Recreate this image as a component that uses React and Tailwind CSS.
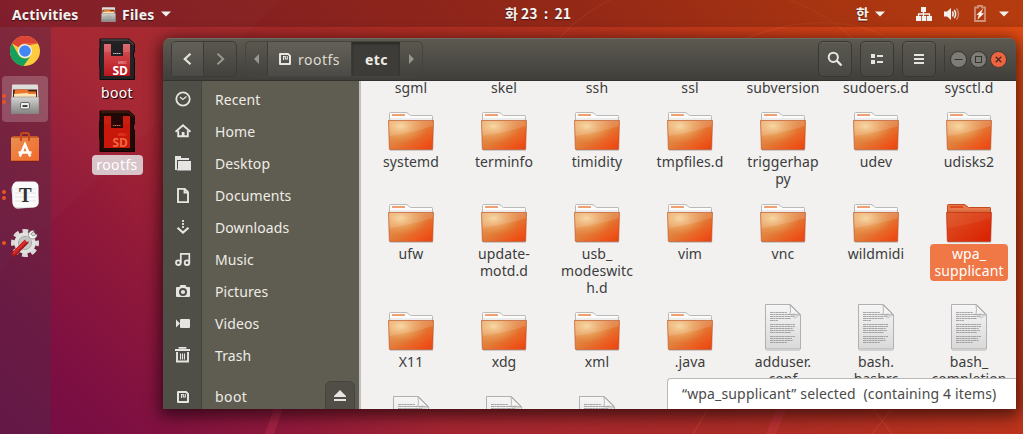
import React from "react";

const Svg = ({ w, h, box, children, className = "" }) => (
  <svg width={w} height={h} viewBox={box || `0 0 ${w} ${h}`} className={`block shrink-0 ${className}`} fill="none">
    {children}
  </svg>
);

function Defs() {
  return (
    <svg width="0" height="0" className="absolute">
      <defs>
        <linearGradient id="fold" x1="0" y1="0" x2="1" y2="1">
          <stop offset="0" stopColor="#eba469" />
          <stop offset="0.5" stopColor="#e27c38" />
          <stop offset="0.85" stopColor="#ee5016" />
          <stop offset="1" stopColor="#d9491a" />
        </linearGradient>
        <radialGradient id="glow" cx="0.27" cy="0.2" r="0.6">
          <stop offset="0" stopColor="#f7d69c" stopOpacity="0.95" />
          <stop offset="1" stopColor="#e8a050" stopOpacity="0" />
        </radialGradient>
        <linearGradient id="foldSel" x1="0" y1="0" x2="1" y2="0.8">
          <stop offset="0" stopColor="#dd5423" />
          <stop offset="1" stopColor="#da2304" />
        </linearGradient>
        <linearGradient id="paper" x1="0" y1="0" x2="0" y2="1">
          <stop offset="0" stopColor="#f6f6f6" />
          <stop offset="1" stopColor="#d9d9d9" />
        </linearGradient>
        <linearGradient id="metal" x1="0" y1="0" x2="0" y2="1">
          <stop offset="0" stopColor="#d4d4d2" />
          <stop offset="1" stopColor="#858583" />
        </linearGradient>
        <linearGradient id="card" x1="0" y1="0" x2="0" y2="1">
          <stop offset="0" stopColor="#d9575b" />
          <stop offset="1" stopColor="#b7161d" />
        </linearGradient>
        <linearGradient id="bag" x1="0" y1="0" x2="1" y2="1">
          <stop offset="0" stopColor="#e8904f" />
          <stop offset="1" stopColor="#f3692a" />
        </linearGradient>
      </defs>
    </svg>
  );
}

function Folder({ selected }) {
  return (
    <Svg w={48} h={48}>
      <path d="M3 46.3H46" stroke="#000" strokeOpacity=".2" />
      <path
        d="M2.5 18V9.5Q2.5 8.5 3.5 8.5H19Q20 8.5 21 9.5L23.5 11.5H45Q45.5 11.5 45.5 12.5V18Z"
        fill={selected ? "#e8784a" : "#fbfbfb"}
        stroke={selected ? "#c24a20" : "#b9b9b7"}
      />
      <rect x="5" y="10" width="13" height="2" rx=".6" fill={selected ? "#dd4a20" : "#f0a070"} />
      <path d="M3 15H45" stroke={selected ? "#d15c34" : "#dcdcdc"} />
      <path d="M1.5 16.5H46.5L45.7 45Q45.6 45.5 45 45.5H3Q2.4 45.5 2.3 45Z" fill={selected ? "url(#foldSel)" : "url(#fold)"} />
      {!selected && <path d="M1.5 16.5H46.5L45.7 45H2.3Z" fill="url(#glow)" />}
      <path d="M2 17H46L45.8 22Q28 28 2.4 32Z" fill="#fff" fillOpacity={selected ? ".06" : ".13"} />
      <path d="M1.5 16.5H46.5L45.7 45Q45.6 45.5 45 45.5H3Q2.4 45.5 2.3 45Z" stroke={selected ? "#b32406" : "#b74b20"} strokeOpacity=".6" />
    </Svg>
  );
}

function TextFile() {
  const lines = [17, 25, 24, 21, 8, 0, 25, 25, 23, 24, 21, 0, 25, 22, 23, 17];
  return (
    <Svg w={48} h={48}>
      <path d="M7 46.3H41" stroke="#000" strokeOpacity=".15" />
      <path d="M6.5 .5H31.5L41.5 10.5V45H6.5Z" fill="url(#paper)" stroke="#b0b0b0" />
      {lines.map((l, i) => (
        <path key={i} d={`M11 ${8.5 + i * 2}h${l}`} stroke="#8e8e8e" strokeOpacity=".75" strokeDasharray="3 .4 2 .3" />
      ))}
      <path d="M31 1Q32 6 31 10.5Q36 9.5 41 11Z" fill="#f4f4f4" stroke="#aaa" strokeWidth=".8" />
      <path d="M31 11l5 4 5-3.5Q36 9.5 31 11Z" fill="#aaa" fillOpacity=".35" />
    </Svg>
  );
}

function SdCard({ selected }) {
  return (
    <Svg w={36} h={43}>
      <path d="M1 1H30L35.5 6V14L34.5 15V19L35.5 20V41.5H1V29L0 28V12L1 11Z" fill={selected ? "#1e0b05" : "#232325"} stroke={selected ? "#100" : "#0b0b0c"} />
      <path d="M2 2H29.5L34.5 6.6" stroke={selected ? "#5a2815" : "#5a5a5c"} />
      <path d="M5 6H31V38H5Z" fill={selected ? "#c9170c" : "url(#card)"} />
      <path d="M5 6H31V14H5Z" fill="#fff" fillOpacity={selected ? ".03" : ".12"} />
      <path d="M12 6H24V18H12Z" fill={selected ? "#250805" : "#202022"} />
      <path d="M14 15.5H22" stroke={selected ? "#c9663c" : "#b9b9b9"} strokeDasharray="1.6 .4" />
      <text x="19" y="26.3" textLength="9" lengthAdjust="spacingAndGlyphs" fontFamily="Open Sans, sans-serif" fontSize="4" fill={selected ? "#ef5b34" : "#f6c7c7"}>MMC</text>
      <text x="13.5" y="36.8" textLength="15.5" lengthAdjust="spacingAndGlyphs" fontFamily="Open Sans, sans-serif" fontWeight="700" fontSize="13" fill={selected ? "#f0693c" : "#fff"}>SD</text>
    </Svg>
  );
}

function Cabinet({ size = 30 }) {
  return (
    <Svg w={size} h={size} box="0 0 30 30">
      <path d="M2 1.5Q2 .5 3 .5H27Q28 .5 28 1.5L28.8 28.5Q28.8 29.5 28 29.5H2Q1.2 29.5 1.2 28.5Z" fill="#dededc" />
      <path d="M3 5.5H27V13H3Z" fill="#4a2412" />
      <path d="M5 5.5H17L19 7.5H26V13H4Z" fill="#e8762e" />
      <path d="M4 10L17 9l2 1h7v3H4Z" fill="#ffe5b5" />
      <path d="M1 13H29V29Q29 29.5 28 29.5H2Q1 29.5 1 29Z" fill="url(#metal)" stroke="#777" strokeWidth=".5" />
      <rect x="10.5" y="18.5" width="9" height="6.5" rx="1.4" fill="#ececea" stroke="#666" />
      <rect x="12.5" y="21" width="5" height="2" fill="#444" />
    </Svg>
  );
}

const Chrome = () => (
  <Svg w={30} h={30}>
    <circle cx="15" cy="15" r="15" fill="#fdcb3d" />
    <path d="M2 7.5A15 15 0 0 1 28 7.5H15A7.5 7.5 0 0 0 8.5 11.2Z" fill="#dd4436" />
    <path d="M28 7.5H15L8 11Z" fill="#dd4436" />
    <path d="M2 7.5A15 15 0 0 0 13.5 30L21.5 18.8A7.5 7.5 0 0 1 8.5 18.8Z" fill="#16a05d" />
    <circle cx="15" cy="15" r="7" fill="#f3f5f7" />
    <circle cx="15" cy="15" r="5.8" fill="#4486f4" />
  </Svg>
);

const Software = () => (
  <Svg w={30} h={32}>
    <path d="M1 6.5L3 5H27L29 6.5Z" fill="#c9531d" />
    <path d="M1 6.5H29V30H1Z" fill="url(#bag)" />
    <path d="M1 30.3H29" stroke="#7b1d1a" />
    <path d="M11 10V4Q11 2 13 2H17Q19 2 19 4V10" stroke="#c9481a" strokeWidth="2" />
    <path d="M9.8 25.5L15 13.5L20.2 25.5M8.5 21.5H21.5" stroke="#fff" strokeWidth="2.5" />
  </Svg>
);

const Typora = () => (
  <Svg w={30} h={30}>
    <rect x="2" y="3" width="26" height="25" rx="5" fill="#cfcfcf" transform="rotate(-5 15 15)" />
    <rect x="2.5" y="1.5" width="26" height="26" rx="5" fill="#fafafa" />
    <path d="M5 9H26M5 13H26M5 17H26M5 21H26" stroke="#e4e4e4" />
    <text x="9" y="21.6" textLength="12.6" lengthAdjust="spacingAndGlyphs" fontFamily="Liberation Serif, serif" fontWeight="700" fontSize="22" fill="#303030">T</text>
  </Svg>
);

const Settings = () => (
  <Svg w={30} h={30}>
    <circle cx="15" cy="15" r="11.8" stroke="#d9d9d7" strokeWidth="4.4" strokeDasharray="5.6 3.67" strokeDashoffset="2.8" />
    <circle cx="15" cy="15" r="8.5" fill="#c6c6c4" stroke="#e0e0de" strokeWidth="4.5" />
    <circle cx="15" cy="15" r="6.5" stroke="#a6a6a4" />
    <path d="M4 26L16 14" stroke="#9e1719" strokeWidth="5" strokeLinecap="round" />
    <path d="M4 25L15.5 13.5" stroke="#d8292b" strokeWidth="3" strokeLinecap="round" />
    <path d="M16 13L20 9.5" stroke="#c4c4c2" strokeWidth="3.6" />
    <path d="M24.5 2.8A4.3 4.3 0 1 0 27 6L23 8L20.8 6Z" fill="#f4f4f2" stroke="#777" strokeWidth=".7" />
  </Svg>
);

function DockItem({ dots = 0, active, children }) {
  return (
    <div className="relative flex h-12 w-[50px] items-center justify-center">
      <div className={`flex h-[46px] w-[46px] items-center justify-center rounded-[4px] ${active ? "bg-white/20" : ""}`}>{children}</div>
      <div className="absolute left-[2px] top-0 flex h-12 flex-col items-center justify-center gap-[2px]">
        {Array.from({ length: dots }, (_, i) => <i key={i} className="block h-1 w-1 rounded-full bg-[#e95420]" />)}
      </div>
    </div>
  );
}

const Caret = () => <Svg w={10} h={6}><path d="M0 .5H10L5 5.5Z" fill="#f2f2f0" /></Svg>;

const FG = "#e6e5e1";
const places = [
  ["Recent", <><circle cx="8" cy="8" r="6.7" stroke={FG} strokeWidth="1.8" /><path d="M5 6l2.8 2.5L11.5 5.5" stroke={FG} strokeWidth="1.3" /></>],
  ["Home", <><path d="M.5 8.8L8 2.2L15.5 8.8" stroke={FG} strokeWidth="1.9" /><path d="M3.2 7.5V13.2H12.8V7.5" stroke={FG} strokeWidth="1.9" /><path d="M6.7 9h2.8v4H6.7Z" fill={FG} /></>],
  ["Desktop", <><path d="M0 1H6V3H14V5H2V15H0Z" fill={FG} /><path d="M3 6H16V15.5H2L3 13Z" fill={FG} /></>],
  ["Documents", <path d="M3 1.9H9.7L13 5.2V15.1H3ZM9.5 1.9V5.6H13" stroke={FG} strokeWidth="1.9" />],
  ["Downloads", <><path d="M8 1V9" stroke={FG} strokeWidth="1.8" strokeDasharray="2 1" /><path d="M2.5 8.8L8 13.6L13.5 8.8" stroke={FG} strokeWidth="2.1" /></>],
  ["Music", <><circle cx="3.3" cy="11.7" r="2.3" stroke={FG} strokeWidth="1.8" /><circle cx="12" cy="11.7" r="2.3" stroke={FG} strokeWidth="1.8" /><path d="M5.8 12V2.8H14.3V12" stroke={FG} strokeWidth="1.7" /></>],
  ["Pictures", <><path fillRule="evenodd" d="M2 4H4.5L5.5 2H10.5L11.5 4H14Q15 4 15 5V13Q15 14 14 14H2Q1 14 1 13V5Q1 4 2 4ZM8 5A4 4 0 1 0 8 13A4 4 0 1 0 8 5Z" fill={FG} /><circle cx="8" cy="9" r="2.1" fill={FG} /></>],
  ["Videos", <><rect x="5" y="4" width="10" height="9" rx="1" fill={FG} /><path d="M1 4.5L5 8.5L1 12.5Z" fill={FG} /></>],
  ["Trash", <><path d="M0 3H15M4.5 1.6V.9H10.5V1.6" stroke={FG} strokeWidth="1.9" /><path d="M2 5V14.5H13V5" stroke={FG} strokeWidth="1.9" /><path d="M5.5 6.5V12.5M7.5 6.5V12.5M9.5 6.5V12.5" stroke={FG} strokeWidth="1.1" /></>],
];

const Drive = () => (
  <>
    <path d="M3 2.9H11L13 4.9V13.1H3Z" stroke={FG} strokeWidth="2" strokeLinejoin="round" />
    <path d="M6.5 9V5.5H8.3V8H10.3V5" stroke={FG} strokeWidth="1.1" />
  </>
);

const rows = [
  [["systemd"], ["terminfo"], ["timidity"], ["tmpfiles.d"], ["triggerhap", "py"], ["udev"], ["udisks2"]],
  [["ufw"], ["update-", "motd.d"], ["usb_", "modeswitc", "h.d"], ["vim"], ["vnc"], ["wildmidi"], ["wpa_", "supplicant"]],
  [["X11"], ["xdg"], ["xml"], [".java"], ["adduser.", "conf"], ["bash.", "bashrc"], ["bash_", "completion"]],
];

function Item({ lines, file, selected }) {
  return (
    <div className="flex flex-col items-center pl-px">
      {file ? <TextFile /> : <Folder selected={selected} />}
      <div className={`whitespace-nowrap rounded-[4px] pt-px text-center leading-[17px] tracking-[0.1px] ${selected ? "-mt-[8px] w-[78px] translate-y-2 bg-[#f07746] pb-[2px] text-white" : ""}`}>
        {lines.map((l) => <div key={l}>{l}</div>)}
      </div>
    </div>
  );
}

const HeadBtn = ({ children }) => (
  <div className="flex h-9 w-[34px] items-center justify-center rounded-[5px] border border-[#383732] bg-gradient-to-b from-[#5a5850] to-[#494843] shadow-[inset_0_1px_0_rgba(255,255,255,0.07)]">
    {children}
  </div>
);

export default function App() {
  return (
    <div className="relative flex h-[434px] w-[1023px] flex-col overflow-hidden bg-[linear-gradient(45deg,#720c46_0%,#7d0f42_9%,#921a39_22%,#a42532_31%,#a92a28_48%,#ba331d_69%,#d04016_85%,#e34c12_100%)] font-['Noto_Sans','Noto_Sans_CJK_KR',sans-serif] text-[14px]">
      <Defs />
      <svg width="1023" height="434" viewBox="0 0 1023 434" className="pointer-events-none absolute inset-0" fill="none">
        <path d="M0 270L160 120L280 0H0Z" fill="#fff" fillOpacity=".015" />
        <path d="M265 434L275 405H284L274 434ZM766 434L778 405H788L776 434Z" fill="#e0405a" fillOpacity=".25" />
        <path d="M545 55Q575 15 620 -5M720 50Q830 -5 910 50M790 0Q830 15 860 45M693 434L710 405M870 405L892 434M895 405L872 434" stroke="#ff7040" strokeOpacity=".16" strokeWidth="1.5" />
      </svg>

      <header className="relative flex h-[27px] shrink-0 items-center bg-black/20 pt-px font-bold text-[#f4f3f1] [text-shadow:0_1px_1px_rgba(0,0,0,0.5)]">
        <div className="flex w-[495px] items-center pl-3">
          <span className="w-[89px] tracking-[0.15px]">Activities</span>
          <Cabinet size={15} />
          <span className="ml-[6px] w-[39px] tracking-[0.2px]">Files</span>
          <Caret />
        </div>
        <div className="w-[351px] whitespace-pre pl-[10px] pb-px font-['Noto_Sans_CJK_KR',sans-serif]">화 23<span className="px-[3px]"> : </span>21</div>
        <div className="flex items-center pb-px pl-[10px]">
          <span className="w-[19px] font-['Noto_Sans_CJK_KR',sans-serif]">한</span>
          <Caret />
          <Svg w={16} h={16} className="ml-[31px]"><path d="M5 1h5v5H5ZM0 10h5v5H0ZM5.7 10h4.6v5H5.7ZM11 10h5v5h-5Z" fill="#f2f2f0" /><path d="M7.5 5V10M2.5 11V8H13.5V11" stroke="#f2f2f0" strokeWidth="1.3" /></Svg>
          <Svg w={16} h={16} className="ml-3"><path d="M0 5.5H3L7 2V14L3 10.5H0Z" fill="#f2f2f0" /><path d="M8.5 5.5Q10 8 8.5 10.5M10.3 3.8Q13 8 10.3 12.2" stroke="#f2f2f0" strokeWidth="1.5" /><path d="M12.5 2.3Q16.5 8 12.5 13.7" stroke="#f2f2f0" strokeOpacity=".45" strokeWidth="1.4" /></Svg>
          <Svg w={12} h={17} className="ml-[14px]"><path d="M1 2.5H4V1H8V2.5H11V16H1Z" stroke="#f2e8e4" strokeOpacity=".5" strokeWidth="1.8" /><path d="M8.5 4.5L2.8 9.7H5.3L3.8 14L9.6 8.4H6.8Z" fill="#fff" stroke="#fff" strokeWidth=".5" /></Svg>
          <div className="ml-[13px]"><Caret /></div>
        </div>
      </header>

      <div className="relative flex min-h-0 flex-1">
        <nav className="flex w-[51px] shrink-0 flex-col bg-[#453048]/35">
          <DockItem><Chrome /></DockItem>
          <DockItem active dots={2}><Cabinet /></DockItem>
          <DockItem><Software /></DockItem>
          <DockItem dots={2}><Typora /></DockItem>
          <DockItem dots={1}><Settings /></DockItem>
        </nav>

        <div className="flex w-[112px] shrink-0 flex-col items-center pl-[20px] pt-[11px] leading-5 text-white">
          <SdCard />
          <div className="h-[29px] pt-[2px] tracking-[0.3px] [text-shadow:1px_1px_1px_#000]">boot</div>
          <SdCard selected />
          <div className="mt-[2px] h-5 w-[51px] rounded-[4px] bg-[#d8c5ca] text-center leading-[19px] tracking-[0.4px]">rootfs</div>
        </div>

        <main className="mt-[11px] flex h-[371px] w-[853px] shrink-0 flex-col overflow-hidden rounded-t-[7px] shadow-[0_4px_16px_3px_rgba(0,0,0,0.6)]">
          <div className="flex h-[43px] shrink-0 items-center border-b border-[#33322e] bg-gradient-to-b from-[#5d5a51] to-[#403f3b] pl-2 text-[#dfdbd2] shadow-[inset_0_1px_0_#6e6b62]">
            <div className="flex h-9 w-[66px] rounded-[5px] border border-[#3c3b37]">
              <div className="flex w-8 items-center justify-center border-r border-[#3c3b37] bg-white/5">
                <Svg w={9} h={12}><path d="M7.5 .8L1.8 6L7.5 11.2" stroke="#e6e3da" strokeWidth="2.2" /></Svg>
              </div>
              <div className="flex flex-1 items-center justify-center">
                <Svg w={9} h={12}><path d="M1.5 .8L7.2 6L1.5 11.2" stroke="#99968d" strokeWidth="2" /></Svg>
              </div>
            </div>
            <div className="ml-2 flex h-9 w-[178px] rounded-[5px] border border-[#45443f]">
              <div className="flex w-[21px] items-center justify-center"><Svg w={5} h={10}><path d="M5 0V10L0 5Z" fill="#99968d" /></Svg></div>
              <div className="flex w-[85px] items-center border-x border-[#3c3b37] bg-white/5 pl-[9px]">
                <Svg w={16} h={16}><Drive /></Svg>
                <span className="ml-[5px] tracking-[0.5px]">rootfs</span>
              </div>
              <div className="flex w-[48px] items-center justify-center bg-[#3d3c38] pl-px font-bold tracking-[0.4px] text-[#f0ede5] shadow-[inset_0_2px_3px_rgba(0,0,0,0.3)]">etc</div>
              <div className="flex flex-1 items-center justify-center"><Svg w={5} h={10}><path d="M0 0V10L5 5Z" fill="#99968d" /></Svg></div>
            </div>
            <div className="ml-auto flex gap-2">
              <HeadBtn><Svg w={16} h={16}><circle cx="6.3" cy="6.3" r="4.6" stroke={FG} strokeWidth="2" /><path d="M9.7 9.7L14.5 14.5" stroke={FG} strokeWidth="2.4" /></Svg></HeadBtn>
              <HeadBtn><Svg w={14} h={12}><path d="M1 1h4v4H1ZM1 7h4v4H1ZM7 2h6v2H7ZM7 8h6v2H7Z" fill={FG} /></Svg></HeadBtn>
              <HeadBtn><Svg w={10} h={12}><path d="M0 2H10M0 6H10M0 10H10" stroke={FG} strokeWidth="2" /></Svg></HeadBtn>
            </div>
            <div className="ml-2 h-7 w-px bg-[#3c3b37]" />
            <div className="ml-[5px] mr-[9px] flex gap-[3px]">
              <Svg w={17} h={17}><circle cx="8.5" cy="8.5" r="8" fill="#7e7c76" stroke="#35342f" /><path d="M4.5 8.5H12.5" stroke="#35342f" /></Svg>
              <Svg w={17} h={17}><circle cx="8.5" cy="8.5" r="8" fill="#7e7c76" stroke="#35342f" /><rect x="5.5" y="5.5" width="6" height="6" stroke="#35342f" /></Svg>
              <Svg w={17} h={17}><circle cx="8.5" cy="8.5" r="8" fill="#ed6540" stroke="#45352e" /><path d="M5.7 5.7L11.3 11.3M11.3 5.7L5.7 11.3" stroke="#51291c" strokeWidth="1.3" /></Svg>
            </div>
          </div>

          <div className="flex min-h-0 flex-1">
            <aside className="w-[196px] shrink-0 overflow-hidden bg-[linear-gradient(90deg,#504f47_38px,#45443d_38px,#45443d_39px,#5f5d51_39px)] pt-[2px] text-[#eeece6]">
              {places.map(([name, art]) => (
                <div key={name} className="flex h-8 items-center pl-3">
                  <Svg w={16} h={16}>{art}</Svg>
                  <span className="ml-6 tracking-[0.1px]">{name}</span>
                </div>
              ))}
              <div className="mt-[11px] flex h-[30px] items-start pl-3">
                <Svg w={16} h={16} className="mt-[7px]"><Drive /></Svg>
                <span className="ml-6 w-[110px] pt-[4px] tracking-[0.4px]">boot</span>
                <div className="-mt-px flex h-[34px] w-[30px] shrink-0 justify-center rounded-[6px] border border-[#45443d] bg-[#504e46] pt-[8px]">
                  <Svg w={12} h={12}><path d="M6 0L12 6V7H0V6ZM0 9H12V11H0Z" fill={FG} /></Svg>
                </div>
              </div>
            </aside>
            <section className="relative min-w-0 flex-1 overflow-hidden border-l-2 border-[#c3c1bd] bg-[#f2f1f0] text-[#3c3c3c]">
              <div className="ml-[3px] grid grid-cols-[repeat(7,93px)] grid-rows-[23px_92px_108px_92px_92px]">
                {["sgml", "skel", "ssh", "ssl", "subversion", "sudoers.d", "sysctl.d"].map((t) => (
                  <div key={t} className="-mt-[2px] pl-px text-center leading-[17px] tracking-[0.1px]">{t}</div>
                ))}
                {rows.flatMap((r, ri) => r.map((l, i) => (
                  <Item key={l.join("")} lines={l} file={ri === 2 && i > 3} selected={l[0] === "wpa_"} />
                )))}
                {[0, 1, 2].map((i) => <div key={i} className="flex flex-col items-center pl-px"><TextFile /></div>)}
              </div>
              <div className="absolute bottom-0 right-0 flex h-[31px] w-[349px] items-center whitespace-pre rounded-tl-[4px] border-l border-t border-[#b9b7b3] bg-white pb-px pl-[14px] tracking-[0.15px] text-[#4a4a4a]">“wpa_supplicant” selected  (containing 4 items)</div>
            </section>
          </div>
        </main>
      </div>
    </div>
  );
}
